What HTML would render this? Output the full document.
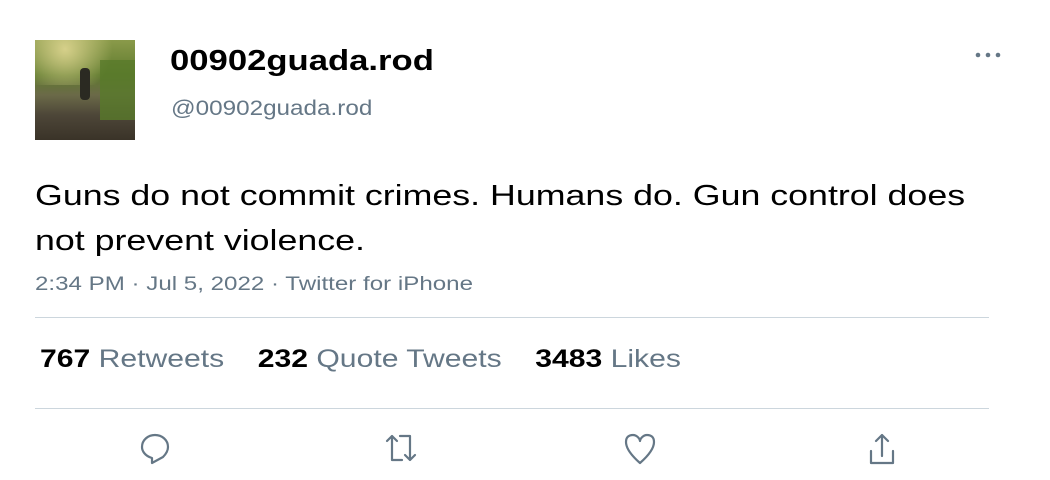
<!DOCTYPE html>
<html><head><style>
body{margin:0;width:1050px;height:480px;background:#fff;font-family:"Liberation Sans",sans-serif;position:relative;overflow:hidden}
.a{position:absolute;white-space:nowrap;transform-origin:0 0}
.g{color:#657786}
</style></head><body>
<div class="a" style="left:35px;top:40px;width:100px;height:100px;background:linear-gradient(180deg,#8a9a4a 0%,#5f7a2e 35%,#6b6a48 55%,#4d4638 75%,#3a3328 100%)">
<div style="position:absolute;left:0;top:0;width:100px;height:45px;background:radial-gradient(circle at 30% 20%,#d6d08a,transparent 60%)"></div>
<div style="position:absolute;left:45px;top:28px;width:10px;height:32px;background:#2b2a22;border-radius:4px"></div>
<div style="position:absolute;left:65px;top:20px;width:35px;height:60px;background:#597a2a;opacity:.8"></div>
</div>
<div class="a" style="left:170px;top:45px;font-size:29px;font-weight:bold;color:#000;transform:scaleX(1.195)">00902guada.rod</div>
<div class="a g" style="left:171px;top:97px;font-size:21px;transform:scaleX(1.155)">@00902guada.rod</div>
<svg class="a" style="left:974px;top:50px" width="28" height="10"><circle cx="4" cy="5" r="2.3" fill="#657786"/><circle cx="14" cy="5" r="2.3" fill="#657786"/><circle cx="24" cy="5" r="2.3" fill="#657786"/></svg>
<div class="a" style="left:35px;top:174px;font-size:29px;line-height:45px;color:#000;transform:scaleX(1.233)">Guns do not commit crimes. Humans do. Gun control does<br>not prevent violence.</div>
<div class="a g" style="left:35px;top:273px;font-size:19.5px;transform:scaleX(1.237)">2:34 PM · Jul 5, 2022 · Twitter for iPhone</div>
<div class="a" style="left:35px;top:317px;width:954px;height:1px;background:#ccd6dd"></div>
<div class="a" style="left:40px;top:345px;font-size:25px;transform:scaleX(1.205)"><b>767</b> <span class="g">Retweets</span>&nbsp;&nbsp;&nbsp; <b>232</b> <span class="g">Quote Tweets</span>&nbsp;&nbsp;&nbsp; <b>3483</b> <span class="g">Likes</span></div>
<div class="a" style="left:35px;top:408px;width:954px;height:1px;background:#ccd6dd"></div>
<svg class="a" style="left:0;top:430px" width="1050" height="40" fill="none" stroke="#657786" stroke-width="2.2" stroke-linecap="round" stroke-linejoin="round">
<path d="M152 33 L152 28 C145 26 142 21 142 17 C142 10 148 5 155 5 C162 5 168 10 168 17 C168 21 166 24 163 27 Z"/>
<path d="M392 6 L392 30 L402 30 M387 11 L392 6 L397 11 M400 6 L410 6 L410 30 M405 25 L410 30 L415 25"/>
<path d="M640 33 C632 26 626 19 626 12 C626 7 629 5 633 5 C637 5 640 9 640 11 C640 9 643 5 647 5 C651 5 654 7 654 12 C654 19 648 26 640 33 Z"/>
<path d="M871 21 L871 33 L893 33 L893 21 M882 26 L882 5 M876 11 L882 5 L888 11"/>
</svg>
</body></html>
